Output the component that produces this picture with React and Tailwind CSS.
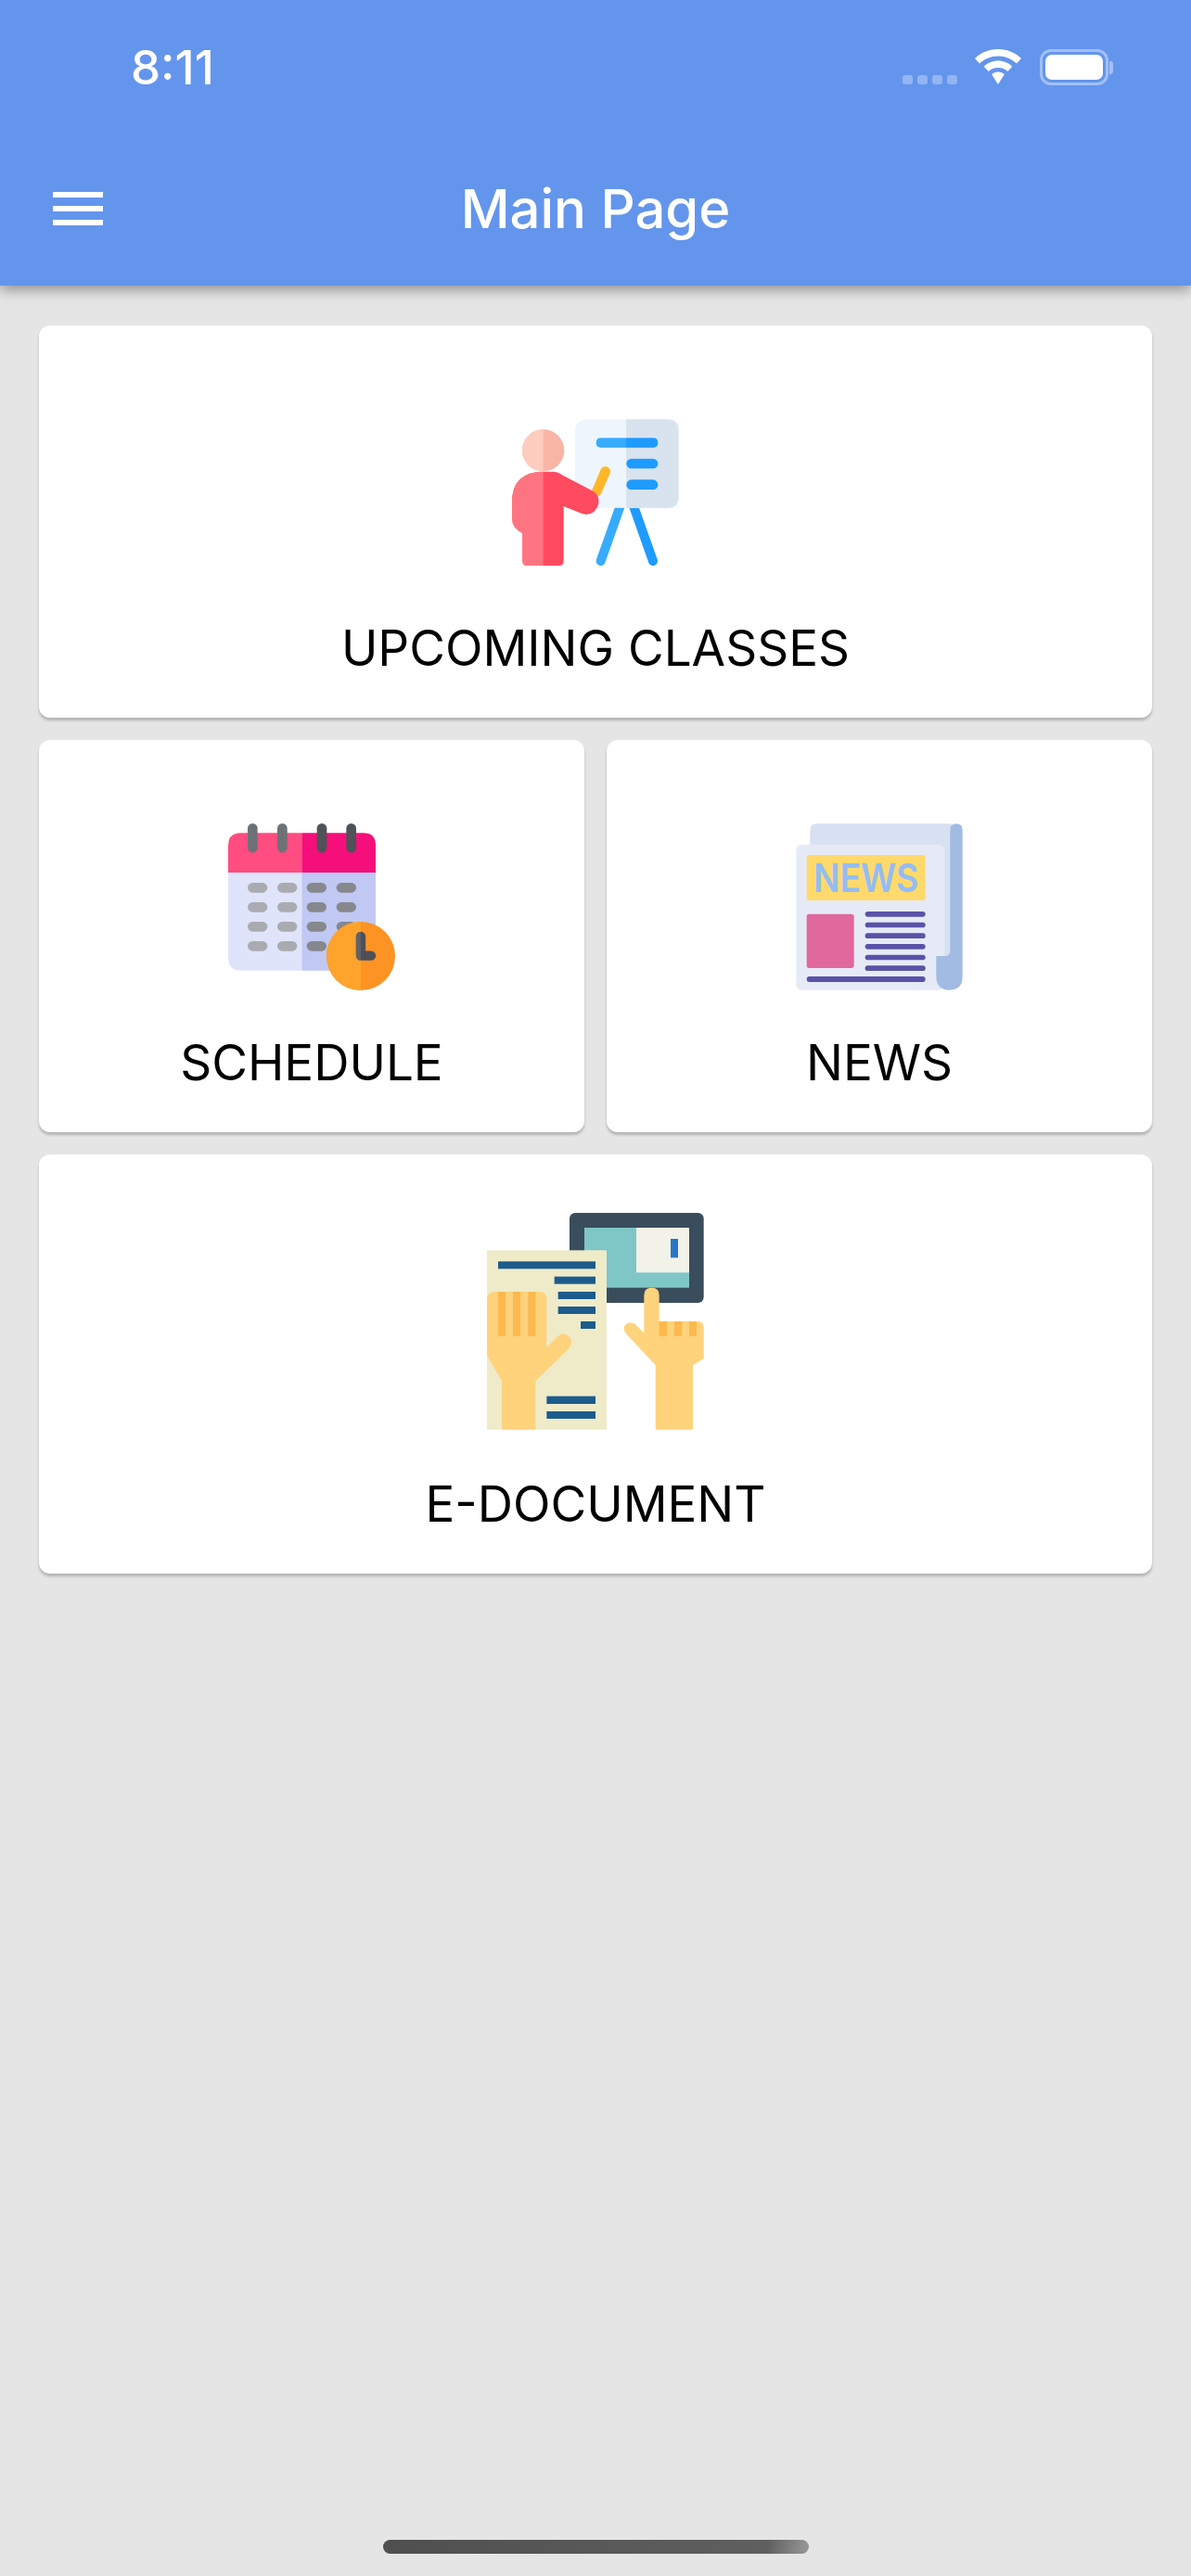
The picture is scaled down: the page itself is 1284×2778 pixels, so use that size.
import React from 'react';

const font = { fontFamily: 'Inter, "Liberation Sans", sans-serif' };

// Status bar glyphs
const SignalDots = () => (
    <div className="flex items-center gap-[5px] mt-[28px] opacity-30">
        {[0, 1, 2, 3].map((i) => (
            <div key={i} className="w-[11px] h-[10px] rounded-[3px] bg-white"></div>
        ))}
    </div>
);

const WifiIcon = () => (
    <svg width="52" height="38" viewBox="0 0 52 38" fill="none">
        <path d="M26 0C16 0 7.500 3.800 1 10L6 15.500C11.200 10.500 18.200 7.500 26 7.500C33.800 7.500 40.800 10.500 46 15.500L51 10C44.500 3.800 36 0 26 0Z" fill="#fff" />
        <path d="M26 12.500C20 12.500 14.700 14.800 10.700 18.700L15.700 24C18.400 21.400 22 19.900 26 19.900C30 19.900 33.600 21.400 36.300 24L41.300 18.700C37.300 14.800 32 12.500 26 12.500Z" fill="#fff" />
        <path d="M26 24.500C23.300 24.500 21 25.500 19.200 27.200L26 38L32.800 27.200C31 25.500 28.700 24.500 26 24.500Z" fill="#fff" />
    </svg>
);

const Battery = () => (
    <div className="flex items-center">
        <div className="w-[74px] h-[39px] rounded-[12px] border-[3px] border-white/40 p-[3px]">
            <div className="w-full h-full rounded-[7px] bg-white"></div>
        </div>
        <div className="w-[4px] h-[14px] ml-[1px] rounded-r-[3px] bg-white/40"></div>
    </div>
);

const MenuIcon = () => (
    <div className="flex flex-col gap-[9px] w-[54px]">
        <div className="h-[6px] bg-white"></div>
        <div className="h-[6px] bg-white"></div>
        <div className="h-[6px] bg-white"></div>
    </div>
);

// Illustrations, drawn in the coordinates of the 3x crops
const TeacherIcon = () => (
    <svg width="180" height="180" viewBox="156 63 540 540">
        <path d="M505 380L443 555" stroke="#37abff" strokeWidth="30" strokeLinecap="round" />
        <path d="M550 380L612 555" stroke="#1f9bff" strokeWidth="30" strokeLinecap="round" />
        <rect x="360" y="97" width="335" height="286" rx="35" fill="#eef5fc" />
        <path d="M525 97H660Q695 97 695 132V348Q695 383 660 383H525Z" fill="#d8e3ef" />
        <path d="M525 157H443.500Q428 157 428 172.500Q428 188 443.500 188H525Z" fill="#37abff" />
        <path d="M525 157H612.500Q628 157 628 172.500Q628 188 612.500 188H525Z" fill="#1e9bff" />
        <rect x="526" y="224" width="102" height="32" rx="16" fill="#1e9bff" />
        <rect x="526" y="292" width="102" height="32" rx="16" fill="#1e9bff" />
        <path d="M430 330L458 265" stroke="#ffb629" strokeWidth="32" strokeLinecap="round" />
        <circle cx="257" cy="197" r="68" fill="#f9b5a6" />
        <path d="M257 129A68 68 0 0 0 257 265Z" fill="#ffcdc0" />
        <path d="M257 266H290Q305 266 318 277L420 330Q440 345 436 370Q425 410 385 403L323 378V555Q323 570 308 570H205Q190 570 190 555V465Q156 450 156 415V365Q156 266 257 266Z" fill="#ff4a60" />
        <path d="M257 266V570H205Q190 570 190 555V465Q156 450 156 415V365Q156 266 257 266Z" fill="#ff7480" />
    </svg>
);

const CalendarIcon = () => {
    const cols = [141, 237, 332, 428];
    const rows = [276, 339, 402, 465];
    return (
        <svg width="180" height="180" viewBox="78 84 540 540">
            <path d="M78 243H316V560H118Q78 560 78 520Z" fill="#e0e4fa" />
            <path d="M316 243H555V520Q555 560 515 560H316Z" fill="#c0c8f3" />
            <path d="M78 243V155Q78 115 118 115H316V243Z" fill="#ff4c81" />
            <path d="M316 115H515Q555 115 555 155V243H316Z" fill="#f50f7b" />
            <rect x="141" y="84" width="32" height="95" rx="16" fill="#6e7276" />
            <rect x="237" y="84" width="32" height="95" rx="16" fill="#6e7276" />
            <rect x="365" y="84" width="32" height="95" rx="16" fill="#4f5257" />
            <rect x="460" y="84" width="32" height="95" rx="16" fill="#4f5257" />
            {rows.map((y) =>
                cols.map((x) => (
                    <rect key={`${x}-${y}`} x={x} y={y} width="64" height="32" rx="16" fill={x < 316 ? '#a9abb0' : '#86888e'} />
                ))
            )}
            <circle cx="507" cy="513" r="111" fill="#fd9322" />
            <path d="M507 402A111 111 0 0 0 507 624Z" fill="#ffa32c" />
            <path d="M507 450V512H540" fill="none" stroke="#4f5056" strokeWidth="31" strokeLinecap="round" strokeLinejoin="round" />
            <path d="M507 434.500A15.500 15.500 0 0 0 491.500 450V512A15.500 15.500 0 0 0 507 527.500Z" fill="#5f6268" />
        </svg>
    );
};

const NewsIcon = () => (
    <svg width="180" height="180" viewBox="54 54 540 540">
        <rect x="100" y="55" width="470" height="440" rx="20" fill="#d7e1f1" />
        <rect x="55" y="122" width="480" height="471" rx="20" fill="#e6eaf7" />
        <path d="M553 75Q553 55 573 55Q593 55 593 75V550Q593 593 550 593Q508 593 508 550V483H535Q553 483 553 465Z" fill="#a2bbe3" />
        <rect x="89" y="156" width="384" height="147" rx="8" fill="#ffd96b" />
        <text x="111" y="275" fontFamily="Inter, sans-serif" fontWeight="600" fontSize="126" textLength="340" lengthAdjust="spacingAndGlyphs" fill="#93bdf5">NEWS</text>
        <rect x="89" y="347" width="153" height="175" rx="8" fill="#e0689c" />
        {[339, 374, 409, 444, 479, 514].map((y) => (
            <rect key={y} x="278" y={y} width="195" height="17" rx="8.500" fill="#5a52a8" />
        ))}
        <rect x="89" y="549" width="384" height="18" rx="9" fill="#5a52a8" />
    </svg>
);

const DocumentIcon = () => (
    <svg width="234" height="234" viewBox="75 54 702 702">
        <rect x="342" y="54" width="434" height="291" rx="18" fill="#3a4d5c" />
        <rect x="390" y="102" width="339" height="194" fill="#7fc7c6" />
        <rect x="558" y="102" width="171" height="145" fill="#f2f2e8" />
        <rect x="669" y="138" width="24" height="61" fill="#2a76c4" />
        <rect x="75" y="175" width="387" height="580" fill="#efebc9" />
        <rect x="111" y="211" width="315" height="24" fill="#1c5c8c" />
        <rect x="293" y="260" width="133" height="24" fill="#1c5c8c" />
        <rect x="305" y="309" width="121" height="24" fill="#1c5c8c" />
        <rect x="305" y="357" width="121" height="24" fill="#1c5c8c" />
        <rect x="378" y="405" width="48" height="24" fill="#1c5c8c" />
        <rect x="268" y="647" width="158" height="25" fill="#1c5c8c" />
        <rect x="268" y="696" width="158" height="24" fill="#1c5c8c" />
        <path d="M75 335Q75 309 100 309H245Q268 309 268 335V490L305 452Q325 437 342 455Q355 475 340 492L232 598V755H123V598L75 515Z" fill="#ffd27c" />
        <rect x="111" y="309" width="24" height="144" fill="#fdb94e" />
        <rect x="159" y="309" width="24" height="144" fill="#fdb94e" />
        <rect x="208" y="309" width="24" height="144" fill="#fdb94e" />
        <path d="M583 320Q583 296 608 296Q632 296 632 320V405H755Q776 405 776 425V525L741 547V755H620V547L525 445Q510 425 525 413Q540 403 555 415L583 443Z" fill="#ffd27c" />
        <rect x="632" y="405" width="25" height="48" fill="#fdb94e" />
        <rect x="681" y="405" width="24" height="48" fill="#fdb94e" />
        <rect x="729" y="405" width="24" height="48" fill="#fdb94e" />
    </svg>
);

// Menu tile
const Tile = ({ label, icon, tall }) => (
    <div className={`flex flex-col items-center rounded-[12px] bg-white shadow-[0_3px_3px_rgba(0,0,0,0.22)] ${tall ? 'h-[452px] pt-[63px]' : 'h-[423px] pt-[90px]'}`}>
        {icon}
        <div className={`text-[53px] leading-[60px] text-black ${tall ? 'mt-[50px]' : 'mt-[48px]'}`}>{label}</div>
    </div>
);

const App = () => {
    return (
        <div className="flex flex-col w-[1284px] h-[2778px] bg-[#e5e5e5] overflow-hidden" style={font}>
            <header className="flex flex-col h-[308px] bg-[#6495ed] shadow-[0_4px_14px_rgba(0,0,0,0.4)] text-white">
                <div className="flex justify-between h-[177px] pt-[53px] pl-[141px] pr-[84px]">
                    <div className="text-[51px] leading-[40px] font-medium">8:11</div>
                    <div className="flex items-start">
                        <SignalDots />
                        <div className="ml-[18px] mr-[19px]"><WifiIcon /></div>
                        <Battery />
                    </div>
                </div>
                <div className="grid grid-cols-[1fr_auto_1fr] items-center px-[57px] h-[96px]">
                    <MenuIcon />
                    <div className="text-[58px] leading-[70px] font-medium">Main Page</div>
                </div>
            </header>

            <main className="flex flex-col gap-[24px] px-[42px] pt-[43px]">
                <Tile label="UPCOMING CLASSES" icon={<TeacherIcon />} />
                <div className="grid grid-cols-2 gap-[24px]">
                    <Tile label="SCHEDULE" icon={<CalendarIcon />} />
                    <Tile label="NEWS" icon={<NewsIcon />} />
                </div>
                <Tile label="E-DOCUMENT" icon={<DocumentIcon />} tall />
            </main>

            <div className="flex justify-center mt-auto pb-[24px]">
                <div className="w-[459px] h-[15px] rounded-full bg-[linear-gradient(100deg,#4f4f4f_0%,#5f5f5f_90%,#999_100%)]"></div>
            </div>
        </div>
    );
};

export default App;
